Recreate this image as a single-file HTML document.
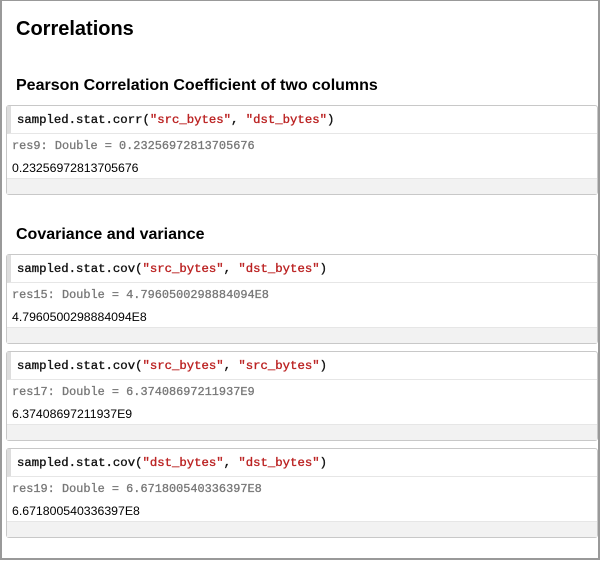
<!DOCTYPE html>
<html><head><style>
*{margin:0;padding:0;box-sizing:border-box}
body{width:600px;height:561px;background:#fff;position:relative;overflow:hidden;font-family:"Liberation Sans",Arial,sans-serif}
.frame{position:absolute;left:0;top:0;width:600px;height:560px;border:1px solid #999;border-width:1px 2px 2px 2px}
h1{position:absolute;left:16px;top:18px;font-size:20px;font-weight:bold;color:#000}
h2{position:absolute;left:16px;font-size:16px;font-weight:bold;color:#000}
.cell{position:absolute;left:6px;width:592px;border:1px solid #c8c8c8;border-radius:3px;background:#fff}
.code{height:28px;border-left:4px solid #ddd;border-bottom:1px solid #e6e6e6;font-family:"Liberation Mono",monospace;font-size:12.3px;line-height:28px;padding-left:6px;color:#111;-webkit-text-stroke:0.35px #111}
.s{color:#b22;-webkit-text-stroke:0.35px #b22}
.res{font-family:"Liberation Mono",monospace;font-size:11.9px;color:#777;-webkit-text-stroke:0.3px #777;padding-left:5px;height:24px;line-height:24px}
.val{font-size:12.3px;color:#000;padding-left:5px;height:20px;line-height:20px}
.foot{height:16px;background:#f2f2f2;border-top:1px solid #e6e6e6}
</style></head><body>
<div class="frame"></div>
<h1>Correlations</h1>
<h2 style="top:77px">Pearson Correlation Coefficient of two columns</h2>
<div class="cell" style="top:105px">
<div class="code">sampled.stat.corr(<span class="s">"src_bytes"</span>, <span class="s">"dst_bytes"</span>)</div>
<div class="res">res9: Double = 0.23256972813705676</div>
<div class="val">0.23256972813705676</div>
<div class="foot"></div>
</div>
<h2 style="top:226px">Covariance and variance</h2>
<div class="cell" style="top:254px">
<div class="code">sampled.stat.cov(<span class="s">"src_bytes"</span>, <span class="s">"dst_bytes"</span>)</div>
<div class="res">res15: Double = 4.7960500298884094E8</div>
<div class="val">4.7960500298884094E8</div>
<div class="foot"></div>
</div>
<div class="cell" style="top:351px">
<div class="code">sampled.stat.cov(<span class="s">"src_bytes"</span>, <span class="s">"src_bytes"</span>)</div>
<div class="res">res17: Double = 6.37408697211937E9</div>
<div class="val">6.37408697211937E9</div>
<div class="foot"></div>
</div>
<div class="cell" style="top:448px">
<div class="code">sampled.stat.cov(<span class="s">"dst_bytes"</span>, <span class="s">"dst_bytes"</span>)</div>
<div class="res">res19: Double = 6.671800540336397E8</div>
<div class="val">6.671800540336397E8</div>
<div class="foot"></div>
</div>
</body></html>
